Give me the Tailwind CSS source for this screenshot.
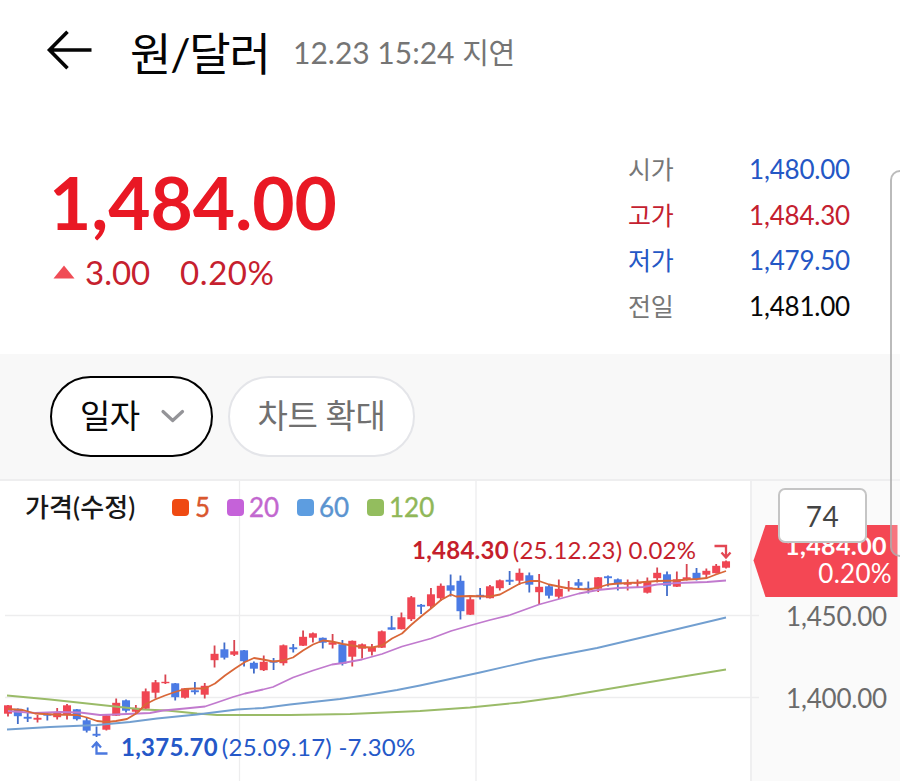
<!DOCTYPE html>
<html lang="ko">
<head>
<meta charset="utf-8">
<title>원/달러</title>
<script src="https://cdn.jsdelivr.net/npm/@tailwindcss/browser@4"></script>
</head>
<body class="bg-white">
<div class="relative flex h-[781px] w-[900px] flex-col overflow-hidden bg-white font-['Lato','Noto_Sans_CJK_KR',sans-serif] whitespace-nowrap">
  <header class="flex h-[106px] items-center pl-[46px]">
    <svg class="mb-[6px] h-[40px] w-[48px] shrink-0" viewBox="0 0 48 40" fill="none" stroke="#050505" stroke-width="3.6"><path d="M45.500 20H3.500M21.500 1.800 3.500 20l18 18.200"/></svg>
    <h1 class="mt-[1px] ml-[36px] w-[163px] text-[45px] leading-[60px] tracking-[-1.2px] text-[#050505]">원/달러</h1>
    <p class="mb-[1px] text-[30px] leading-[40px] tracking-[0px] text-[#757575]">12.23 15:24 <span class="text-[29px] tracking-[-0.3px]">지연</span></p>
  </header>

  <section class="flex h-[248px] justify-between pr-[50px] pl-[52px]">
    <div class="pt-[51px]">
      <div class="-ml-[3px] text-[73px] leading-[90px] font-bold tracking-[-0.1px] text-[#e91824]">1,484.00</div>
      <div class="flex h-[50px] items-center text-[33px] leading-[50px] text-[#c6202e]">
        <svg class="mt-[-1px] h-[14px] w-[23px]" viewBox="0 0 23 14"><path d="M12 .5 22.5 13.5H1.5Z" fill="#f04c56"/></svg>
        <span class="ml-[10px] w-[95px]">3.00</span>
        <span class="tracking-[0.6px]">0.20%</span>
      </div>
    </div>
    <dl class="grid w-[222px] auto-rows-[45.5px] grid-cols-[1fr_auto] content-start pt-[41px] text-[26px] leading-[45.5px] tracking-[-0.2px]">
      <dt class="text-[25px] text-[#777]">시가</dt><dd class="text-[#2457c5]">1,480.00</dd>
      <dt class="text-[25px] text-[#c4202f]">고가</dt><dd class="text-[#c4202f]">1,484.30</dd>
      <dt class="text-[25px] text-[#2457c5]">저가</dt><dd class="text-[#2457c5]">1,479.50</dd>
      <dt class="text-[25px] text-[#777]">전일</dt><dd class="text-[#080808]">1,481.00</dd>
    </dl>
  </section>

  <nav class="flex h-[127px] items-start gap-[15px] border-b-2 border-[#eeeeef] bg-[#f8f8f8] pt-[22px] pl-[50px]">
    <button class="flex h-[81px] w-[163px] items-center rounded-full border-[2.4px] border-black bg-white pb-[3px] pl-[28px] text-[33px] leading-[48px] tracking-[-0.6px] text-[#080808]">일자
      <svg class="mt-[2px] ml-[20px] h-[16px] w-[26px]" viewBox="0 0 26 16" fill="none" stroke="#949498" stroke-width="3.2" stroke-linecap="round" stroke-linejoin="round"><path d="M3 3.5 12.7 12.500 22.5 3.5"/></svg>
    </button>
    <button class="flex h-[81px] w-[187px] items-center justify-center rounded-full border-2 border-[#e4e5e9] bg-white pb-[3px] text-[33px] leading-[48px] tracking-[-0.4px] text-[#707070]">차트 확대</button>
  </nav>

  <section class="relative flex h-[300px]">
    <div class="h-[300px] w-[750px] bg-white"></div>
    <aside class="h-[300px] w-[150px] border-l-2 border-[#efeff0] bg-[#fafafa]"></aside>

    <svg class="absolute top-0 left-0 h-[300px] w-[900px]" viewBox="0 481 900 300">
      <g stroke="#ededee" stroke-width="1.3"><path d="M239.5 481V781M476 481V781M5 615.5H759M5 697.5H759"/></g>
      <g id="candles"></g>
      <g fill="none" stroke-width="1.8" stroke-linejoin="round">
        <path stroke="#9abb68" d="M7 695.5 50 699.5 115 706.5 143 709.5 167 710.5 197 713.5 217 715H290L350 714 420 711 470 707.5 520 702.5 560 697 620 687 680 677 726 669.5"/>
        <path stroke="#729fd0" d="M7 729.5 50 727 97 725 130 722 157 718.5 197 714.5 237 709.5 263 708 290 704.5 340 699 370 694.5 397 690 420 685.5 480 672.5 537 659.5 597 648 663 632.5 726 617.5"/>
        <path stroke="#c17ace" d="M8 711 35 713 60 712 80 712.5 100 715 115 714.5 150 713 163 710.5 185 708.5 205 706.5 217 702.5 233 697 245 693.5 263 689.5 273 687 293 677.5 313 670.5 332 664.5 343 663 362 659.5 382 654 402 646.5 431 638.5 451 631 470 625.5 490 620 510 615 539 604.5 559 599 579 593.5 598 590 618 588 643 587 657 584.5 677 583 707 582 726 580.5"/>
        <path stroke="#d96738" d="M8 709 23 710 35 713.5 53 714.5 77 715 87 717.5 97 721 107 722 116 721 127 719 137 713 146 704 155 699.5 165 695.5 175 692 185 689 195 688.5 205 688.5 215 683.5 225 675.5 235 668.5 245 662 254 658 263 659.5 273 661.5 283 660.5 293 657.5 303 650.5 313 644.5 323 640.5 332 641.5 343 644 352 645.5 362 647 372 647.5 382 645.5 392 638.5 402 633.5 411 625 421 616.5 431 608.5 441 600 451 594.5 456 596.5 470 596 490 596.5 500 594.5 510 589 520 583.5 530 581 539 581 549 584.5 559 586.5 569 588.5 589 589.5 598 587.5 608 584.5 618 583.5 638 582.5 657 581 677 580.5 687 579.5 697 579 707 578 716 574.5 726 571"/>
      </g>
      <path d="M714.5 546H726V557M721.5 552.5 726 557.5 730.5 552.5" fill="none" stroke="#e34753" stroke-width="2.3"/>
      <path d="M107.5 753.5H96.500V743M92 747.5 96.5 742.5 101 747.5" fill="none" stroke="#4b78df" stroke-width="2.3"/>
      <path d="M753.500 560.5 765.5 525H897.5V597H765.5Z" fill="#f44754"/>
    </svg>

    <div class="absolute top-[6px] left-[25px] flex h-[40px] items-center text-[26px] leading-[40px]">
      <span class="w-[147px] text-[26px] font-medium tracking-[0.1px] text-[#181818]">가격(수정)</span>
      <span class="flex w-[55px] items-center gap-[6px] text-[#d9572e] [-webkit-text-stroke:0.4px_#d9572e]"><i class="size-[17px] rounded-[4px] bg-[#ef4a12]"></i>5</span>
      <span class="flex w-[70px] items-center gap-[5px] text-[#c267cf] [-webkit-text-stroke:0.4px_#c267cf]"><i class="size-[17px] rounded-[4px] bg-[#c562d9]"></i>20</span>
      <span class="flex w-[70px] items-center gap-[5px] text-[#5b94d0] [-webkit-text-stroke:0.4px_#5b94d0]"><i class="size-[17px] rounded-[4px] bg-[#5d9de0]"></i>60</span>
      <span class="flex items-center gap-[5px] text-[#90b758] [-webkit-text-stroke:0.4px_#90b758]"><i class="size-[17px] rounded-[4px] bg-[#93bd5e]"></i>120</span>
    </div>

    <p class="absolute top-[54px] left-[412px] text-[24px] leading-[30px] text-[#c51f2d]"><b class="tracking-[0.25px]">1,484.30</b><span class="ml-[4px] tracking-[0.17px]">(25.12.23) 0.02%</span></p>
    <p class="absolute top-[251px] left-[121px] text-[24px] leading-[30px] text-[#2558c8]"><b class="tracking-[0.25px]">1,375.70</b><span class="ml-[4px] tracking-[0.25px]">(25.09.17) -7.30%</span></p>

    <div class="absolute top-[49px] right-[13px] text-[25px] leading-[30px] font-bold tracking-[0.4px] text-white">1,484.00</div>
    <div class="absolute top-[77px] right-[8px] text-[26px] leading-[30px] tracking-[0.3px] text-white">0.20%</div>
    <div class="absolute top-[120px] right-[13px] text-[26px] leading-[30px] tracking-[-0.2px] text-[#6b6b6b]">1,450.00</div>
    <div class="absolute top-[202px] right-[13px] text-[26px] leading-[30px] tracking-[-0.2px] text-[#6b6b6b]">1,400.00</div>
    <div class="absolute top-[7px] left-[778px] flex h-[55px] w-[89px] items-center justify-center rounded-[7px] border-2 border-[#c5c5c5] bg-white text-[28px] leading-[40px] tracking-[0.5px] text-[#444]">74</div>
  </section>

  <div class="absolute top-[170px] left-[890px] h-[387px] w-[30px] rounded-[10px] border-2 border-[#aaa]/80 bg-white/25"></div>
</div>
<script>
// Daily candles: direction, high, body top, body bottom, low (chart y units).
const candles = `R 705 705.5 713.5 716.5|B 708.5 709 716 724|B 707.5 717 718.5 722|R 715 718 719.5 722.5|B 713 714 715.5 720.5|R 708 713 717 719.5|R 704 705.5 714.5 719.5|B 709 709.5 719 720.5|B 717.5 720.5 730.5 732.5|B 726.5 734 735.5 737|R 714 715.5 729.5 730.5|R 698.5 703 715.5 716|B 699.5 700.5 710.5 712.5|R 705 708 711.5 714|R 688.5 691.5 708.5 709|R 680 682.5 692.5 698.5|R 674.5 682 683 684|B 683 683.5 697 700.5|R 688 688.5 697.5 698.5|B 682 690.5 692 694.5|R 683 686 694.5 698.5|R 645.5 654 660 667.5|B 642.5 649.5 657.5 659.5|R 640 651.5 654.5 656|B 650 650.5 661 666.5|B 661.5 663 668.5 673.5|R 655.5 662 670 671|B 658 661 662.5 670|R 644.5 645.5 663 665.5|B 644 647.5 649 652.5|R 630.5 637 645.5 646|R 632.5 633.5 637.5 642.5|B 637.5 638 642.5 648.5|R 634 642.5 644.5 648.5|B 640 644.5 663.5 665.5|R 640.5 641 656.5 666.5|R 643.5 644.5 648.5 658.5|R 644 647.5 651.5 655.5|R 630.5 631.5 647.5 648|B 616 627.5 629.5 630|R 612.5 617.5 629 629.5|R 596 597.5 619 621|B 604 605 606.5 614|R 588 594.5 606 608.5|R 583.5 586 598 601|B 574.5 585.5 590.5 596.5|B 575.5 581 611 619.5|R 596 599.5 614.5 615|B 588 595 597 599.5|R 585 586.5 598 598.5|R 579.5 580.5 588 590.5|B 571 580 581.5 585|R 568.5 573 580.5 585|B 572.5 575.5 584.5 592.5|R 574 587 592 604|B 585 586.5 595.5 598.5|R 579.5 589 596.5 599|R 581 587.5 588.5 591.5|B 579 582.5 585.5 589.5|B 581.5 588 589.5 593.5|R 577 577.5 588.5 592|B 575.5 576.5 578 586.5|B 578.5 579.5 584 590.5|R 579.5 583 584.5 590.5|R 579.5 582.5 583.5 587.5|R 577.5 581.5 592.5 593.5|R 567.5 573 578 582.5|B 571.5 574.5 585.5 596|R 571.5 579.5 586.5 587|R 564 577.5 579.5 580.5|B 568 573 579 580.5|R 568.5 571 574.5 578.5|R 564 566 573 573.5|R 560.5 561.5 567.5 568.5`.split('|');
document.getElementById('candles').innerHTML = candles.map((row, i) => {
  const [kind, ...v] = row.split(' ');
  const [high, top, bottom, low] = v.map(Number);
  const x = 8 + i * 9.836;
  const red = kind === 'R';
  return `<path d="M${x} ${high}V${low}" stroke="${red ? '#d84450' : '#416cc9'}" stroke-width="1.8"/><rect x="${x - 4}" y="${top - .2}" width="8" height="${bottom - top + .4}" fill="${red ? '#f04653' : '#4b7be5'}"/>`;
}).join('');
</script>
</body>
</html>
